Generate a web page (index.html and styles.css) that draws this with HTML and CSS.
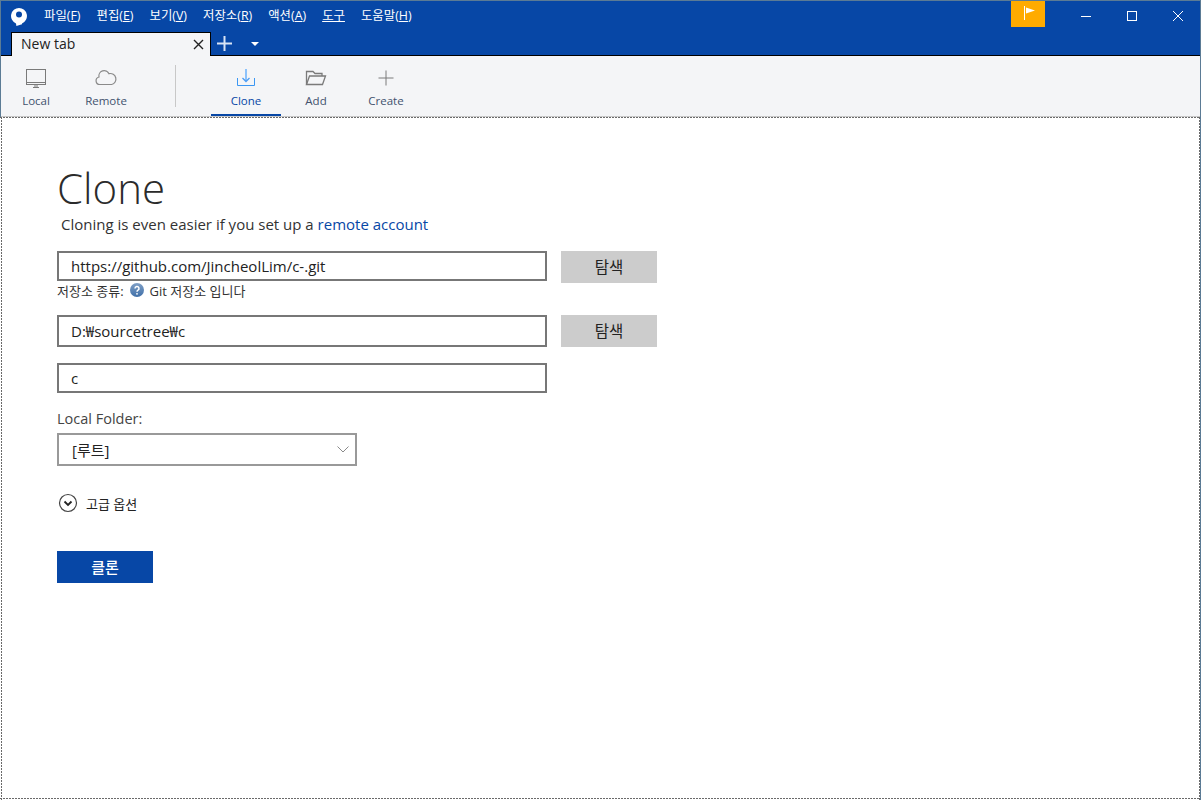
FILE: index.html
```html
<!DOCTYPE html>
<html lang="ko">
<head>
    <meta charset="UTF-8">
    <title>Sourcetree</title>
    <link rel="stylesheet" href="styles.css">
</head>
<body>
    <div class="window">
        <!-- title bar -->
        <div class="titlebar">
            <svg class="logo" width="16" height="18" viewBox="0 0 16 18">
                <path fill="#fff" d="M8 0a8 8 0 0 0-3 15.400l.4 2.600 5.600-1.800v-.8A8 8 0 0 0 8 0z"/>
                <circle cx="8" cy="6.500" r="3" fill="#0747a6"/>
            </svg>
            <div class="menu">
                <span>파일(<u>F</u>)</span>
                <span>편집(<u>E</u>)</span>
                <span>보기(<u>V</u>)</span>
                <span>저장소(<u>R</u>)</span>
                <span>액션(<u>A</u>)</span>
                <span><u>도구</u></span>
                <span>도움말(<u>H</u>)</span>
            </div>
            <div class="flag">
                <svg width="14" height="14" viewBox="0 0 14 14">
                    <path stroke="#fff" d="M2.500 0v14"/>
                    <path fill="#fff" d="M4 1.500l9 3-9 3z"/>
                </svg>
            </div>
            <div class="winbtns">
                <div class="winbtn">
                    <svg width="12" height="12" viewBox="0 0 12 12"><path stroke="#fff" d="M1 6.500h10"/></svg>
                </div>
                <div class="winbtn">
                    <svg width="12" height="12" viewBox="0 0 12 12"><rect x="1.500" y="1.500" width="9" height="9" fill="none" stroke="#fff"/></svg>
                </div>
                <div class="winbtn">
                    <svg width="12" height="12" viewBox="0 0 12 12"><path stroke="#fff" d="M1 1l10 10M11 1L1 11"/></svg>
                </div>
            </div>
        </div>

        <!-- tabs -->
        <div class="tabbar">
            <div class="tab">
                <span class="tab-title">New tab</span>
                <svg width="11" height="11" viewBox="0 0 11 11"><path stroke="#222" stroke-width="1.400" d="M1 1l9 9M10 1l-9 9"/></svg>
            </div>
            <svg class="tab-add" width="15" height="15" viewBox="0 0 15 15"><path stroke="#d8e4f5" stroke-width="2" d="M7.500 0v15M0 7.500h15"/></svg>
            <svg class="tab-more" width="8" height="4" viewBox="0 0 8 4"><path fill="#fff" d="M0 0h8L4 4z"/></svg>
        </div>

        <!-- toolbar -->
        <div class="toolbar">
            <div class="tool">
                <svg width="22" height="20" viewBox="0 0 22 20" fill="none" stroke="#7a7a7a">
                    <rect x="1.500" y="1.500" width="19" height="15"/>
                    <path d="M1 14.500h20M10 17v2M12 17v2M8 19.500h6"/>
                </svg>
                <span>Local</span>
            </div>
            <div class="tool">
                <svg width="22" height="20" viewBox="0 0 22 20" fill="none" stroke="#8a8a8a" stroke-width="1.200">
                    <path d="M4.800 16.500a3.800 3.800 0 0 1-.8-7.500 5.300 5.300 0 0 1 10-3.300 4.200 4.200 0 0 1 2.700 10.800z"/>
                </svg>
                <span>Remote</span>
            </div>
            <div class="tool-sep"></div>
            <div class="tool active">
                <svg width="20" height="20" viewBox="0 0 20 20" fill="none">
                    <path stroke="#3b97f3" d="M1.500 10v7.500h17V10"/>
                    <path stroke="#8cc2fb" stroke-width="2" d="M10 1v12"/>
                    <path stroke="#4a9cf5" stroke-width="1.300" d="M6.500 10l3.500 3.500 3.500-3.500"/>
                </svg>
                <span>Clone</span>
            </div>
            <div class="tool">
                <svg width="22" height="20" viewBox="0 0 22 20" fill="none" stroke="#7a7a7a">
                    <path stroke-width="1.300" d="M1.500 16.500V3.500h6.500l2 2h7v2.500"/>
                    <path stroke-width="1.300" d="M1.500 16.500l3-8.500h16l-3 8.500z"/>
                </svg>
                <span>Add</span>
            </div>
            <div class="tool">
                <svg width="20" height="20" viewBox="0 0 20 20" fill="none" stroke="#7a7a7a">
                    <path d="M10 2.500v15M2.500 10h15"/>
                </svg>
                <span>Create</span>
            </div>
        </div>

        <!-- clone form -->
        <div class="content">
            <h1>Clone</h1>
            <p class="intro">Cloning is even easier if you set up a <a href="#">remote account</a></p>

            <div class="row row-url">
                <div class="field">https://github.com/JincheolLim/c-.git</div>
                <div class="btn-browse">탐색</div>
            </div>
            <div class="repo-type">
                <span>저장소 종류:</span>
                <svg width="14" height="14" viewBox="0 0 14 14">
                    <defs>
                        <linearGradient id="helpfill" x1="0" y1="0" x2="0" y2="1">
                            <stop offset="0" stop-color="#7f9fc6"/>
                            <stop offset="1" stop-color="#3f6fa8"/>
                        </linearGradient>
                    </defs>
                    <circle cx="7" cy="7" r="7" fill="url(#helpfill)"/>
                    <path fill="none" stroke="#fff" stroke-width="1.500" d="M5 5.500a2 2 0 1 1 3 1.700c-.7.400-1 .8-1 1.500"/>
                    <circle cx="7" cy="10.800" r=".9" fill="#fff"/>
                </svg>
                <span>Git 저장소 입니다</span>
            </div>

            <div class="row">
                <div class="field tall">D:₩sourcetree₩c</div>
                <div class="btn-browse">탐색</div>
            </div>
            <div class="row">
                <div class="field">c</div>
            </div>

            <div class="label">Local Folder:</div>
            <div class="select">
                <span>[루트]</span>
                <svg width="12" height="7" viewBox="0 0 12 7"><path fill="none" stroke="#8a8a8a" d="M.5.500L6 6l5.500-5.500"/></svg>
            </div>

            <div class="advanced">
                <svg width="20" height="20" viewBox="0 0 20 20" fill="none" stroke="#444">
                    <circle cx="10" cy="10" r="8.500" stroke-width="1.200"/>
                    <path stroke="#222" stroke-width="1.800" d="M6.500 8.500L10 12l3.500-3.500"/>
                </svg>
                <span>고급 옵션</span>
            </div>

            <div class="btn-clone">클론</div>
        </div>
    </div>
</body>
</html>
```

FILE: styles.css
```css
* {
    margin: 0;
    padding: 0;
    box-sizing: border-box;
}
html, body {
    height: 100%;
    overflow: hidden;
}
body {
    font-family: "Open Sans", "Noto Sans CJK KR", sans-serif;
    color: #222;
    background: #fff;
}
.window {
    height: 800px;
    display: flex;
    flex-direction: column;
    border: 1px solid #5b7b95;
    border-bottom: 0;
}

/* title bar */
.titlebar {
    height: 31px;
    display: flex;
    align-items: flex-start;
    background: #0747a6;
    color: #fff;
    flex-shrink: 0;
}
.logo {
    margin: 7px 0 0 10px;
}
.menu {
    display: flex;
    gap: 16px;
    margin-left: 17px;
    padding-top: 6px;
    font-size: 12.4px;
    line-height: 18px;
}
.flag {
    width: 34px;
    height: 26px;
    margin-left: auto;
    padding: 5px 0 0 11px;
    background: #ffab00;
}
.flag svg {
    display: block;
}
.winbtns {
    display: flex;
    margin-left: 17px;
}
.winbtn {
    width: 46px;
    height: 30px;
    padding-left: 2px;
    display: flex;
    align-items: center;
    justify-content: center;
}

/* tabs */
.tabbar {
    height: 24px;
    display: flex;
    align-items: center;
    padding-left: 10px;
    background: #0747a6;
    border-bottom: 1px solid #000;
    flex-shrink: 0;
}
.tab {
    width: 200px;
    height: 24px;
    display: flex;
    align-items: center;
    justify-content: space-between;
    padding: 0 6px 0 9px;
    background: #f4f5f7;
    border: 1px solid #000;
    border-bottom: 0;
    font-size: 14px;
}
.tab-title {
    margin-top: -2px;
}
.tab-add {
    margin-left: 6px;
}
.tab-more {
    margin-left: 19px;
}

/* toolbar */
.toolbar {
    height: 61px;
    display: flex;
    background: #f4f5f7;
    border-bottom: 1px solid #c8c8c8;
    flex-shrink: 0;
}
.tool {
    width: 70px;
    height: 60px;
    display: flex;
    flex-direction: column;
    align-items: center;
    padding-top: 12px;
    font-size: 11.5px;
    color: #42526e;
}
.tool span {
    margin-top: 5px;
    line-height: 16px;
}
.tool.active {
    color: #0747a6;
    border-bottom: 2px solid #0747a6;
}
.tool-sep {
    width: 1px;
    height: 42px;
    margin: 9px 35px 0 34px;
    background: #c8c8c8;
}

/* clone form, with its 2 on 1 off focus border */
.content {
    flex: 1;
    margin-left: -1px;
    padding: 46px 0 0 57px;
    background:
        repeating-linear-gradient(90deg, #6a6a6a 0 2px, transparent 2px 3px) left top / 100% 1px no-repeat,
        repeating-linear-gradient(90deg, #6a6a6a 0 2px, transparent 2px 3px) left bottom 1px / 100% 1px no-repeat,
        repeating-linear-gradient(180deg, #6a6a6a 0 2px, transparent 2px 3px) left 1px top / 1px 100% no-repeat,
        repeating-linear-gradient(180deg, #6a6a6a 0 2px, transparent 2px 3px) right top / 1px 100% no-repeat,
        #fff;
}
h1 {
    font-size: 42px;
    font-weight: 300;
    line-height: 50px;
    color: #2b2b2b;
}
.intro {
    margin: 1px 0 0 4px;
    font-size: 15px;
    line-height: 20px;
    color: #333;
}
.intro a {
    color: #0747a6;
    text-decoration: none;
}
.row {
    display: flex;
    gap: 14px;
    margin-top: 16px;
}
.row-url {
    margin-top: 17px;
}
.field {
    width: 490px;
    height: 30px;
    padding-left: 12px;
    border: 2px solid #777;
    font-size: 15px;
    line-height: 27px;
}
.field.tall {
    height: 32px;
    line-height: 29px;
}
.btn-browse {
    width: 96px;
    height: 32px;
    background: #ccc;
    text-align: center;
    font-size: 15.5px;
    line-height: 32px;
}
.repo-type {
    height: 18px;
    margin-top: -2px;
    display: flex;
    align-items: center;
    gap: 6px;
    font-size: 13px;
    color: #333;
}
.label {
    margin-top: 16px;
    font-size: 14.5px;
    line-height: 20px;
    color: #444;
}
.select {
    width: 300px;
    height: 33px;
    margin-top: 4px;
    padding: 0 6px 0 13px;
    display: flex;
    align-items: center;
    justify-content: space-between;
    border: 2px solid #999;
    font-size: 15px;
}
.advanced {
    margin-top: 27px;
    height: 20px;
    margin-left: 1px;
    display: flex;
    align-items: center;
    gap: 8px;
    font-size: 13px;
}
.btn-clone {
    width: 96px;
    height: 32px;
    margin-top: 38px;
    background: #0747a6;
    color: #fff;
    text-align: center;
    font-size: 15px;
    font-weight: 500;
    line-height: 32px;
}
```
